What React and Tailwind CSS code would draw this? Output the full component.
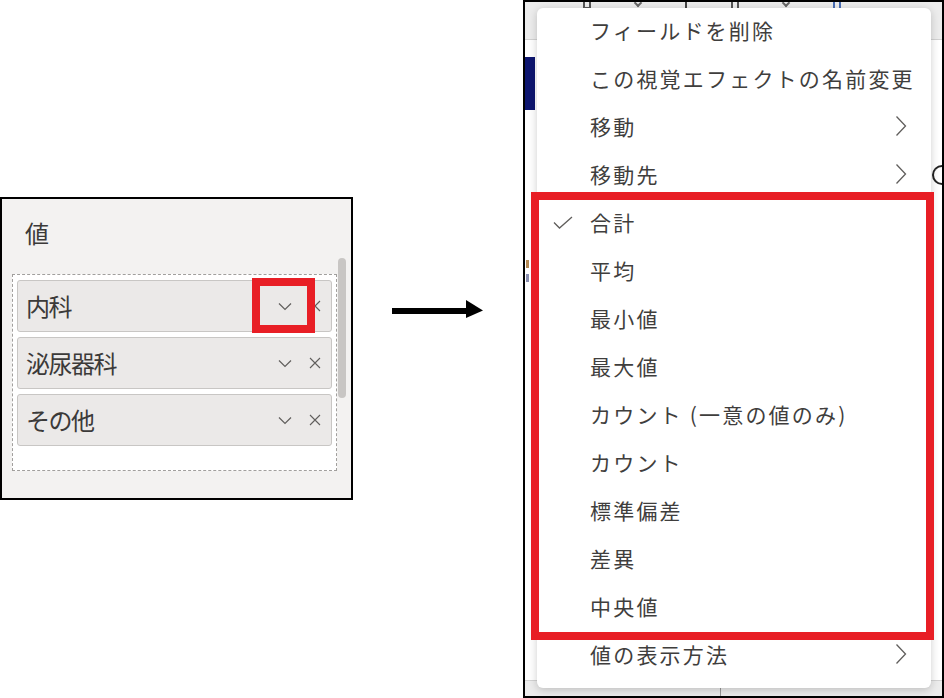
import React from 'react';

const Chevron = () => (
  <svg width="14" height="9" viewBox="0 0 14 9" fill="none">
    <path d="M1 1.5L7 7.5L13 1.5" stroke="#605e5c" strokeWidth="1.2" />
  </svg>
);

const Close = () => (
  <svg width="12" height="12" viewBox="0 0 12 12" fill="none">
    <path d="M1 1L11 11M11 1L1 11" stroke="#605e5c" strokeWidth="1.1" />
  </svg>
);

const Right = () => (
  <svg width="12" height="22" viewBox="0 0 12 22" fill="none">
    <path d="M1.5 1.5L10.5 11L1.5 20.5" stroke="#605e5c" strokeWidth="1.3" />
  </svg>
);

const Check = () => (
  <svg width="20" height="13" viewBox="0 0 20 13" fill="none">
    <path d="M1 6.5L6.5 12L19 1" stroke="#605e5c" strokeWidth="1.3" />
  </svg>
);

const fields = ['内科', '泌尿器科', 'その他'];

const menuItems = [
  { label: 'フィールドを削除' },
  { label: 'この視覚エフェクトの名前変更' },
  { label: '移動', sub: true },
  { label: '移動先', sub: true },
  { label: '合計', checked: true },
  { label: '平均' },
  { label: '最小値' },
  { label: '最大値' },
  { label: 'カウント (一意の値のみ)' },
  { label: 'カウント' },
  { label: '標準偏差' },
  { label: '差異' },
  { label: '中央値' },
  { label: '値の表示方法', sub: true },
];

const FieldWell = () => (
  <div className="relative mt-[197px] w-[353px] h-[303px] border-2 border-black bg-[#f3f2f1] shrink-0">
    <div className="h-[59px] pt-[22px] pl-[23px] text-[24px] leading-none text-[#3b3a39]">値</div>
    <div className="flex items-start">
      <div className="mt-[16px] ml-[10px] w-[325px] h-[197px] border border-dashed border-[#a19f9d] bg-white px-[4px] pt-[5px] flex flex-col gap-[5px]">
        {fields.map((f) => (
          <div
            key={f}
            className="h-[52px] flex items-center pl-[8px] pr-[10px] bg-[#ebe9e8] border border-[#c8c6c4] rounded-[3px]"
          >
            <span className="flex-1 text-[24px] tracking-[-1.5px] leading-none text-[#3b3a39]">{f}</span>
            <Chevron />
            <span className="ml-[17px] flex">
              <Close />
            </span>
          </div>
        ))}
      </div>
      <div className="ml-[1px] w-[8px] h-[140px] rounded-full bg-[#c8c6c4]" />
    </div>
    <div className="absolute left-[250px] top-[79px] w-[63px] h-[55px] border-[8px] border-[#e81e25]" />
  </div>
);

const Arrow = () => (
  <svg className="ml-[39px] mt-[299px] shrink-0" width="92" height="20" viewBox="0 0 92 20">
    <rect x="0" y="9" width="76" height="6" fill="#000" />
    <path d="M74 1L91 11.5L74 19Z" fill="#000" />
  </svg>
);

const ContextMenu = () => (
  <div className="relative ml-auto w-[421px] h-[698px] border-2 border-black bg-white overflow-hidden shrink-0">
    {/* backdrop of the app behind the menu */}
    <div className="h-[38px] bg-[#ececec] border-b border-[#d2d2d2] flex items-start gap-[44px] pl-[58px]">
      <span className="w-[8px] h-[7px] border-x-2 border-b-2 border-[#555]" />
      <span className="w-[6px] h-[6px] border-r-2 border-b-2 border-[#666] rotate-45 -mt-[2px]" />
      <span className="w-[2px] h-[6px] bg-[#444]" />
      <span className="w-[8px] h-[7px] border-x-2 border-[#555]" />
      <span className="w-[6px] h-[6px] border-r-2 border-b-2 border-[#666] rotate-45 -mt-[2px]" />
      <span className="w-[8px] h-[8px] border-x-2 border-[#4a6fb5]" />
    </div>
    <div className="flex h-[640px]">
      <div className="w-[10px] flex flex-col">
        <div className="mt-[17px] h-[53px] bg-[#0e1670]" />
        <div className="mt-[150px] h-[30px] flex flex-col gap-[6px] pl-[1px]">
          <span className="w-[3px] h-[8px] bg-[#b48a55]" />
          <span className="w-[3px] h-[8px] bg-[#8a8fb0]" />
        </div>
      </div>
      <div className="flex-1" />
      <div className="w-[12px] flex flex-col items-end">
        <div className="mt-[125px] w-[10px] h-[20px] rounded-l-full border-2 border-r-0 border-[#222]" />
      </div>
    </div>
    <div className="h-[18px] bg-[#ececec] border-t border-[#d2d2d2] flex gap-[190px] pl-[195px]">
      <span className="w-[1px] h-full bg-[#999]" />
    </div>

    {/* menu */}
    <div className="absolute left-[12px] top-[6px] w-[394px] h-[680px] bg-white rounded-[6px] shadow-[0_2px_8px_rgba(0,0,0,0.2)] font-['Noto_Sans_CJK_JP','Noto_Sans',sans-serif]">
      {menuItems.map((m) => (
        <div key={m.label} className="h-[48px] pb-[4px] flex items-center pr-[24px]">
          <div className="w-[53px] shrink-0 pl-[16px] flex items-center">{m.checked && <Check />}</div>
          <span className="flex-1 min-w-0 whitespace-nowrap text-[21px] tracking-[2.2px] leading-none text-[#3f3e3d]">
            {m.label}
          </span>
          {m.sub && <Right />}
        </div>
      ))}
    </div>

    {/* highlight */}
    <div className="absolute left-[6px] top-[190px] w-[403px] h-[448px] border-[8px] border-[#e81e25]" />
  </div>
);

export default function App() {
  return (
    <div className="w-[944px] h-[698px] flex items-start bg-white overflow-hidden font-['Noto_Sans_CJK_JP','Noto_Sans',sans-serif]">
      <FieldWell />
      <Arrow />
      <ContextMenu />
    </div>
  );
}
